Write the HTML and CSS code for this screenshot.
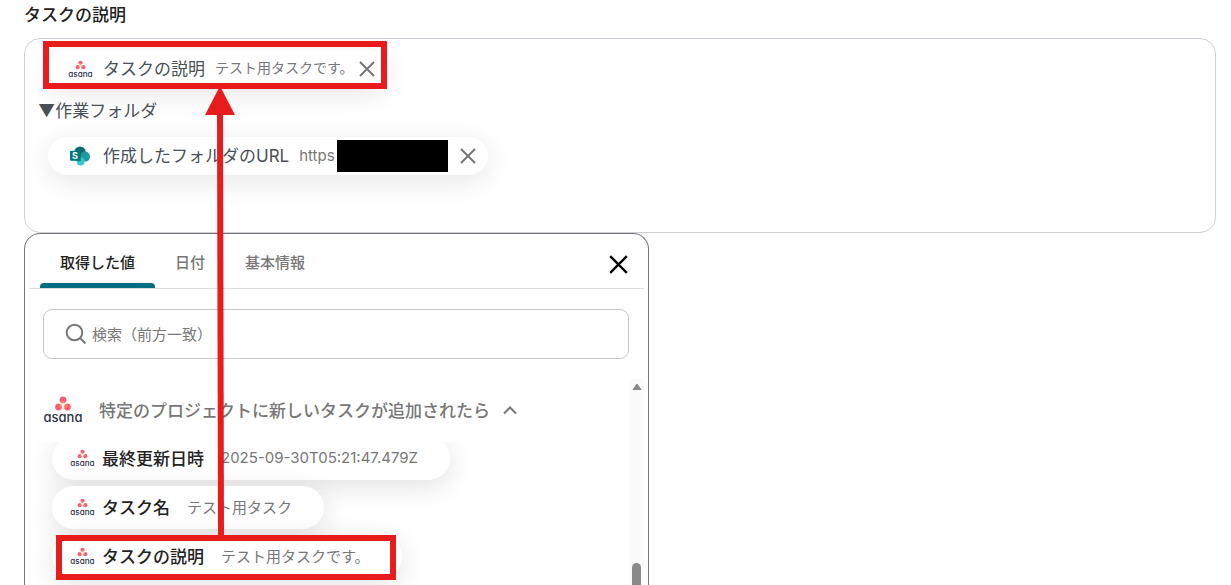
FILE: index.html
```
<!DOCTYPE html>
<html lang="ja">
<head>
    <meta charset="UTF-8">
    <meta name="viewport" content="width=device-width, initial-scale=1.0">
    <title>タスクの説明</title>
    <link rel="stylesheet" href="styles.css">
</head>
<body>
    <div class="page">
        <h1 class="field-title" id="field-title">タスクの説明</h1>

        <div class="editor" role="textbox" aria-labelledby="field-title">
            <div class="chip">
                <svg class="chip-icon" viewBox="0 0 40 28">
                    <defs>
                        <radialGradient id="asana-dots" gradientUnits="userSpaceOnUse" cx="20" cy="9" r="8">
                            <stop offset="0" stop-color="#ffb04d"/>
                            <stop offset="0.3" stop-color="#ff8a5c"/>
                            <stop offset="0.6" stop-color="#fa5f74"/>
                            <stop offset="1" stop-color="#f9597a"/>
                        </radialGradient>
                    </defs>
                    <g fill="url(#asana-dots)">
                        <circle cx="20" cy="4" r="3.4"/>
                        <circle cx="15.6" cy="11" r="3.4"/>
                        <circle cx="24.4" cy="11" r="3.4"/>
                    </g>
                    <text class="asana-word" x="20" y="26" text-anchor="middle">asana</text>
                </svg>
                <span class="chip-name">タスクの説明</span>
                <span class="chip-value">テスト用タスクです。</span>
                <button class="chip-remove" aria-label="削除">
                    <svg viewBox="0 0 16 16"><path d="M1 1 L15 15 M15 1 L1 15"/></svg>
                </button>
            </div>
            <p class="editor-text">▼作業フォルダ</p>
            <div class="chip">
                <svg class="chip-icon" viewBox="0 0 25 20">
                    <circle cx="12" cy="6" r="5.6" fill="#036c70"/>
                    <circle cx="17" cy="10.6" r="5" fill="#1a9ba1"/>
                    <circle cx="12.6" cy="15.6" r="4" fill="#37c6d0"/>
                    <path d="M7 5 h6 v10 h-5.5 z" fill="#025457" opacity="0.5"/>
                    <rect x="2" y="4.8" width="10" height="10" rx="1" fill="#03787c"/>
                    <text class="sp-letter" x="7" y="13" text-anchor="middle">S</text>
                </svg>
                <span class="chip-name">作成したフォルダのURL</span>
                <span class="chip-value url">https</span>
                <span class="redacted"></span>
                <button class="chip-remove" aria-label="削除">
                    <svg viewBox="0 0 16 16"><path d="M1 1 L15 15 M15 1 L1 15"/></svg>
                </button>
            </div>
        </div>

        <div class="picker">
            <div class="tabs" role="tablist">
                <button class="tab active" role="tab" aria-selected="true">取得した値</button>
                <button class="tab" role="tab">日付</button>
                <button class="tab" role="tab">基本情報</button>
                <button class="picker-close" aria-label="閉じる">
                    <svg viewBox="0 0 16 16"><path d="M1 1 L15 15 M15 1 L1 15"/></svg>
                </button>
            </div>

            <label class="search">
                <svg viewBox="0 0 22 22">
                    <circle cx="9.5" cy="9.5" r="7.8"/>
                    <path d="M15 15 L20.5 20.5"/>
                </svg>
                <input type="text" placeholder="検索（前方一致）" aria-label="検索（前方一致）">
            </label>

            <div class="results">
                <div class="group">
                    <button class="group-header">
                        <svg class="group-logo" viewBox="0 0 40 28">
                            <g fill="url(#asana-dots)">
                                <circle cx="20" cy="4" r="3.4"/>
                                <circle cx="15.6" cy="11" r="3.4"/>
                                <circle cx="24.4" cy="11" r="3.4"/>
                            </g>
                            <text class="asana-word" x="20" y="26" text-anchor="middle">asana</text>
                        </svg>
                        <span>特定のプロジェクトに新しいタスクが追加されたら</span>
                        <svg class="chevron" viewBox="0 0 14 10"><path d="M1 8.5 L7 2.5 L13 8.5"/></svg>
                    </button>
                    <div class="options">
                        <button class="option">
                            <svg class="chip-icon" viewBox="0 0 40 28">
                                <g fill="url(#asana-dots)">
                                    <circle cx="20" cy="4" r="3.4"/>
                                    <circle cx="15.6" cy="11" r="3.4"/>
                                    <circle cx="24.4" cy="11" r="3.4"/>
                                </g>
                                <text class="asana-word" x="20" y="26" text-anchor="middle">asana</text>
                            </svg>
                            <span class="option-name">最終更新日時</span>
                            <span class="option-value">2025-09-30T05:21:47.479Z</span>
                        </button>
                        <button class="option">
                            <svg class="chip-icon" viewBox="0 0 40 28">
                                <g fill="url(#asana-dots)">
                                    <circle cx="20" cy="4" r="3.4"/>
                                    <circle cx="15.6" cy="11" r="3.4"/>
                                    <circle cx="24.4" cy="11" r="3.4"/>
                                </g>
                                <text class="asana-word" x="20" y="26" text-anchor="middle">asana</text>
                            </svg>
                            <span class="option-name">タスク名</span>
                            <span class="option-value">テスト用タスク</span>
                        </button>
                        <button class="option">
                            <svg class="chip-icon" viewBox="0 0 40 28">
                                <g fill="url(#asana-dots)">
                                    <circle cx="20" cy="4" r="3.4"/>
                                    <circle cx="15.6" cy="11" r="3.4"/>
                                    <circle cx="24.4" cy="11" r="3.4"/>
                                </g>
                                <text class="asana-word" x="20" y="26" text-anchor="middle">asana</text>
                            </svg>
                            <span class="option-name">タスクの説明</span>
                            <span class="option-value">テスト用タスクです。</span>
                        </button>
                    </div>
                </div>
                <div class="scrollbar">
                    <svg viewBox="0 0 10 8"><path d="M5 1 L9 6.5 H1 Z"/></svg>
                    <div class="thumb"></div>
                </div>
            </div>
        </div>
    </div>

    <!-- highlight boxes and arrow over the form -->
    <div class="mark mark-target"></div>
    <div class="mark mark-source"></div>
    <svg class="arrow" viewBox="0 0 32 450" aria-hidden="true">
        <path d="M16 0 L31 29 H1 Z" fill="#e81c1c"/>
        <path d="M16 26 L17 450" stroke="#e81c1c" stroke-width="6"/>
    </svg>
</body>
</html>
```
FILE: styles.css
```
* {
    box-sizing: border-box;
}

body {
    margin: 0;
    font-family: Inter, "Noto Sans CJK JP", sans-serif;
    background-color: #ffffff;
    color: #222222;
    position: relative;
    overflow: hidden;
}

button {
    font-family: inherit;
    border: none;
    background: none;
    padding: 0;
    cursor: pointer;
}

svg {
    display: block;
    flex-shrink: 0;
}

.asana-word {
    font-family: Inter, sans-serif;
    font-size: 13px;
    font-weight: 500;
    font-feature-settings: "cv11";
    fill: #2f3348;
}

.sp-letter {
    font-family: Inter, sans-serif;
    font-size: 9px;
    font-weight: 700;
    fill: #ffffff;
}

.page {
    display: flex;
    flex-direction: column;
    height: 100vh;
    padding: 3px 15px 0 24px;
}

.field-title {
    margin: 0 0 11px;
    font-size: 17px;
    line-height: 24px;
    font-weight: 500;
}

.editor {
    flex-shrink: 0;
    min-height: 195px;
    padding: 11px 13px;
    border: 1px solid #cccfd5;
    border-radius: 16px;
    color: #495057;
    overflow: hidden;
}

.editor-text {
    margin: 11px 0 13px;
    font-size: 17px;
    line-height: 25px;
}

.chip {
    display: flex;
    align-items: center;
    width: fit-content;
    height: 38px;
    margin-left: 10px;
    padding: 0 12px 0 20px;
    border-radius: 20px;
    background-color: #ffffff;
    box-shadow: 0 6px 28px rgba(0, 0, 0, 0.1);
    line-height: 22px;
    white-space: nowrap;
}

.chip-icon {
    width: 25px;
    height: 20px;
}

.chip-name {
    margin: 0 10px;
    font-size: 17px;
}

.chip-value {
    padding-bottom: 2px;
    font-size: 14px;
    color: #777777;
}

.chip-value.url {
    font-size: 15px;
    padding-bottom: 0;
}

.chip-remove {
    margin-left: 5px;
    color: #777777;
}

.chip-remove svg,
.picker-close svg {
    width: 16px;
    height: 16px;
    fill: none;
    stroke: currentColor;
    stroke-width: 2;
}

.redacted {
    width: 111px;
    height: 32px;
    margin: 0 7px 0 2px;
    background-color: #000000;
}

.picker {
    display: flex;
    flex-direction: column;
    flex: 1;
    min-height: 0;
    width: 100%;
    max-width: 625px;
    padding: 0 4px;
    border: 1px solid #777777;
    border-bottom: none;
    border-radius: 16px 16px 0 0;
    background-color: #ffffff;
}

.tabs {
    display: flex;
    flex-shrink: 0;
    height: 55px;
    padding: 0 16px 0 11px;
    border-bottom: 1px solid #dddddd;
}

.tab {
    position: relative;
    padding: 0 20px;
    font-size: 15px;
    font-weight: 500;
    color: #777777;
}

.tab.active {
    color: #222222;
}

.tab.active::after {
    content: "";
    position: absolute;
    left: 0;
    right: 0;
    bottom: 0;
    height: 5px;
    border-radius: 4px 4px 0 0;
    background-color: #066c82;
}

.picker-close {
    margin-left: auto;
    padding-top: 7px;
    color: #000000;
}

.picker-close svg {
    width: 19px;
    height: 19px;
}

.search {
    display: flex;
    align-items: center;
    flex-shrink: 0;
    gap: 5px;
    height: 50px;
    margin: 20px 15px 20px 14px;
    padding: 0 21px;
    border: 1px solid #c8c8c8;
    border-radius: 9px;
}

.search svg {
    width: 22px;
    height: 22px;
    fill: none;
    stroke: #777777;
    stroke-width: 2;
}

.search input {
    flex: 1;
    min-width: 0;
    padding: 0;
    border: none;
    outline: none;
    font-family: inherit;
    font-size: 15px;
}

.search input::placeholder {
    color: #777777;
}

.results {
    display: flex;
    flex: 1;
    min-height: 0;
    overflow: hidden;
}

.group {
    flex: 1;
    min-width: 0;
    overflow: hidden;
}

.group-header {
    position: relative;
    z-index: 1;
    display: flex;
    align-items: center;
    width: 100%;
    height: 63px;
    padding: 0 0 2px 14px;
    background-color: #ffffff;
    font-size: 17px;
    font-weight: 500;
    color: #777777;
    white-space: nowrap;
}

.group-logo {
    width: 40px;
    height: 28px;
    margin-right: 16px;
}

.chevron {
    width: 14px;
    height: 10px;
    margin-left: 13px;
    fill: none;
    stroke: #777777;
    stroke-width: 2;
}

.options {
    display: flex;
    flex-direction: column;
    align-items: flex-start;
    gap: 6px;
    margin-top: -5px;
    padding-left: 23px;
}

.option {
    display: flex;
    align-items: center;
    height: 43px;
    padding: 0 32px 2px 18px;
    border-radius: 22px;
    background-color: #ffffff;
    box-shadow: 0 6px 28px rgba(0, 0, 0, 0.12);
    white-space: nowrap;
}

.option-name {
    margin: 0 17px 0 7px;
    font-size: 17px;
    font-weight: 500;
    color: #222222;
}

.option-value {
    font-size: 15px;
    color: #777777;
}

.scrollbar {
    display: flex;
    flex-direction: column;
    align-items: center;
    justify-content: space-between;
    width: 15px;
    padding-top: 4px;
    background-color: #fafafa;
}

.scrollbar svg {
    width: 10px;
    height: 8px;
    fill: #8a8a8a;
    stroke: #8a8a8a;
    stroke-width: 1;
    stroke-linejoin: round;
}

.thumb {
    width: 9px;
    height: 22px;
    border-radius: 5px 5px 0 0;
    background-color: #8a8a8a;
}

/* annotations */
.mark {
    position: absolute;
    border: 6px solid #e81c1c;
}

.mark-target {
    left: 43px;
    top: 41px;
    width: 344px;
    height: 48px;
}

.mark-source {
    left: 56px;
    top: 535px;
    width: 340px;
    height: 45px;
}

.arrow {
    position: absolute;
    z-index: 2;
    left: 204px;
    top: 86px;
    width: 32px;
    height: 450px;
}
```
